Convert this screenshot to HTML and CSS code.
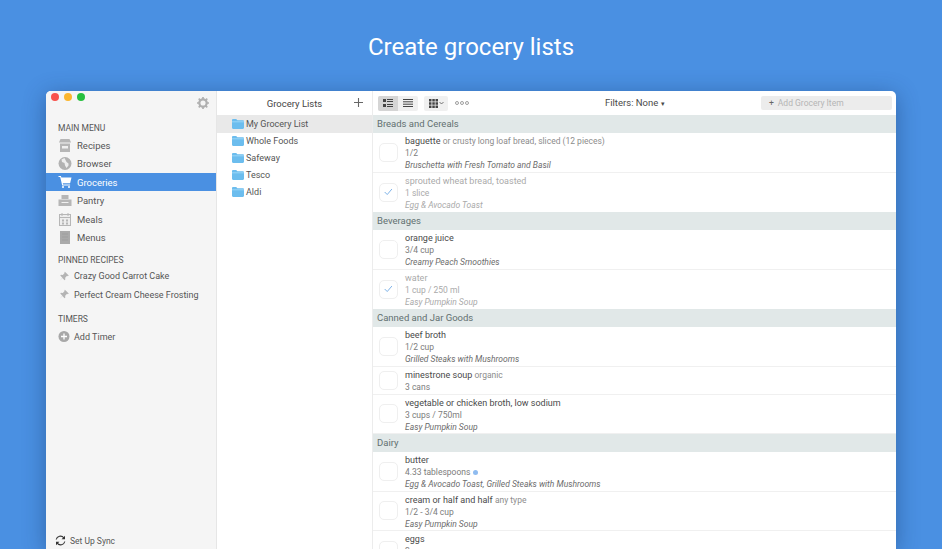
FILE: index.html
```html
<!DOCTYPE html>
<html>
<head>
	<meta charset="UTF-8">
	<title>Create grocery lists</title>
	<link rel="stylesheet" href="styles.css">
</head>
<body>
	<svg class="defs" width="0" height="0">
		<symbol id="folder" viewBox="0 0 12 10">
			<path d="M0 1.2C0 .5.5 0 1.2 0h3l1.2 1.3h5.400c.7 0 1.200.5 1.200 1.200v6.300c0 .7-.5 1.200-1.200 1.200H1.200C.5 10 0 9.500 0 8.800z" fill="#6cbdee"/>
			<rect x="0" y="2.300" width="12" height="1" fill="#9ad6f7"/>
		</symbol>
		<symbol id="pin" viewBox="0 0 12 12">
			<path d="M7 .8l4.200 4.200-1 .6-.9-.3-2 2 .1 2-.8.8-2.300-2.400L1 11l3.200-3.600L1.900 5l.8-.8 2 .1 2-2-.3-.9z" fill="#b4b4b4"/>
		</symbol>
		<symbol id="check" viewBox="0 0 20 20">
			<path d="M5.500 10l3 3 5.500-6.500" fill="none" stroke="#76aee6" stroke-width="1.100"/>
		</symbol>
	</svg>

	<h1 class="headline">Create grocery lists</h1>

	<div class="window">
		<aside class="sidebar">
			<div class="side_top">
				<div class="lights">
					<span class="light red"></span>
					<span class="light yellow"></span>
					<span class="light green"></span>
				</div>
				<svg class="gear" width="12" height="12" viewBox="0 0 14 14">
					<circle cx="7" cy="7" r="4.300" fill="none" stroke="#b0b0b0" stroke-width="2.600"/>
					<path d="M7 0v3M7 11v3M0 7h3M11 7h3M2 2l2.100 2.100M9.900 9.900L12 12M12 2L9.900 4.100M4.100 9.900L2 12" stroke="#b0b0b0" stroke-width="2"/>
				</svg>
			</div>

			<p class="side_title first">MAIN MENU</p>
			<a class="side_item">
				<svg width="12" height="13" viewBox="0 0 12 13"><path d="M1.500 0h9L12 3.500H0z" fill="#b6b6b6"/><path d="M1 4.500h10V13H1z" fill="#b6b6b6"/><path d="M3 7h6v2.500H3z" fill="#f0f0f0"/></svg>
				Recipes
			</a>
			<a class="side_item">
				<svg width="13" height="13" viewBox="0 0 13 13"><circle cx="6.500" cy="6.500" r="6.500" fill="#b2b2b2"/><path d="M6 1L3 2.500 3.500 5 6 6l.5 2.500L8 11l2-2.500V6.500L8 5 7 3z" fill="#eeeeee"/></svg>
				Browser
			</a>
			<a class="side_item active">
				<svg width="13" height="12" viewBox="0 0 13 12"><path d="M0 0h2.400l.5 1.500H13l-1.400 5.700H4.300l.3 1.200h7v1H3.700L1.700 1H0z" fill="#fff"/><circle cx="4.500" cy="11" r="1" fill="#fff"/><circle cx="10.500" cy="11" r="1" fill="#fff"/></svg>
				Groceries
			</a>
			<a class="side_item">
				<svg width="13" height="11" viewBox="0 0 13 11"><path d="M3 0h7v4H3z" fill="#b6b6b6"/><path d="M0 4.500h13V11H0z" fill="#b6b6b6"/><path d="M3 7h7v1H3z" fill="#f0f0f0"/></svg>
				Pantry
			</a>
			<a class="side_item">
				<svg width="12" height="13" viewBox="0 0 12 13"><rect x=".5" y="1.500" width="11" height="11" fill="#ededed" stroke="#b6b6b6"/><path d="M3 0v3M9 0v3M1 4.500h10" stroke="#b6b6b6"/><path d="M3 6.500h2v2H3zM7 6.500h2v2H7zM3 9.500h2v2H3zM7 9.500h2v2H7z" fill="#b6b6b6"/></svg>
				Meals
			</a>
			<a class="side_item">
				<svg width="10" height="13" viewBox="0 0 10 13"><path d="M0 0h10v13H0z" fill="#aaaaaa"/><path d="M2 3h6M2 6h6M2 9h6" stroke="#9c9c9c" stroke-width=".8"/></svg>
				Menus
			</a>

			<p class="side_title">PINNED RECIPES</p>
			<a class="side_item small"><svg width="11" height="11"><use href="#pin"/></svg>Crazy Good Carrot Cake</a>
			<a class="side_item small"><svg width="11" height="11"><use href="#pin"/></svg>Perfect Cream Cheese Frosting</a>

			<p class="side_title timers">TIMERS</p>
			<a class="side_item timer">
				<svg width="11" height="11" viewBox="0 0 11 11"><circle cx="5.500" cy="5.500" r="5.500" fill="#a8a8a8"/><path d="M5.500 2.500v6M2.500 5.500h6" stroke="#fff" stroke-width="1.300"/></svg>
				Add Timer
			</a>

			<div class="sync">
				<svg width="11" height="11" viewBox="0 0 11 11"><path d="M1.200 4.500A4.300 4.300 0 0 1 8.800 2.800M9.800 6.500A4.300 4.300 0 0 1 2.200 8.200" fill="none" stroke="#333" stroke-width="1.100"/><path d="M10 .8v3.400H6.600zM1 10.200V6.800h3.400z" fill="#333"/></svg>
				Set Up Sync
			</div>
		</aside>

		<section class="lists">
			<div class="lists_head">
				<span class="lists_title">Grocery Lists</span>
				<svg class="lists_add" width="9" height="9" viewBox="0 0 9 9"><path d="M4.500 0v9M0 4.500h9" stroke="#666" stroke-width="1.100"/></svg>
			</div>
			<a class="list_row selected"><svg width="12" height="10"><use href="#folder"/></svg>My Grocery List</a>
			<a class="list_row"><svg width="12" height="10"><use href="#folder"/></svg>Whole Foods</a>
			<a class="list_row"><svg width="12" height="10"><use href="#folder"/></svg>Safeway</a>
			<a class="list_row"><svg width="12" height="10"><use href="#folder"/></svg>Tesco</a>
			<a class="list_row"><svg width="12" height="10"><use href="#folder"/></svg>Aldi</a>
		</section>

		<main class="main">
			<div class="toolbar">
				<div class="view_btns">
					<span class="view_btn on">
						<svg width="10" height="8" viewBox="0 0 10 8"><path d="M0 0h3v3H0zM0 5h3v3H0z" fill="#444"/><path d="M4 .5h6M4 2.500h6M4 5.500h6M4 7.500h6" stroke="#444"/></svg>
					</span>
					<span class="view_btn">
						<svg width="10" height="8" viewBox="0 0 10 8"><path d="M0 .5h10M0 2.800h10M0 5.200h10M0 7.500h10" stroke="#444"/></svg>
					</span>
				</div>
				<span class="grid_btn">
					<svg width="9" height="9" viewBox="0 0 9 9"><path d="M0 0h2.500v2.500H0zM3.300 0h2.500v2.500H3.300zM6.500 0H9v2.500H6.500zM0 3.300h2.500v2.500H0zM3.300 3.300h2.500v2.500H3.300zM6.500 3.300H9v2.500H6.500zM0 6.500h2.500V9H0zM3.300 6.500h2.500V9H3.300zM6.500 6.500H9V9H6.500z" fill="#444"/></svg>
					<svg width="5" height="4" viewBox="0 0 5 4"><path d="M.5 1l2 2 2-2" fill="none" stroke="#555" stroke-width=".8"/></svg>
				</span>
				<svg class="dots" width="14" height="4" viewBox="0 0 14 4"><circle cx="2" cy="2" r="1.500" fill="none" stroke="#777" stroke-width=".7"/><circle cx="7" cy="2" r="1.500" fill="none" stroke="#777" stroke-width=".7"/><circle cx="12" cy="2" r="1.500" fill="none" stroke="#777" stroke-width=".7"/></svg>
				<span class="filters">Filters: None <small>▾</small></span>
				<span class="add_item"><b>+</b>Add Grocery Item</span>
			</div>

			<div class="group">Breads and Cereals</div>
			<div class="item">
				<span class="box"></span>
				<div class="info">
					<p class="name">baguette <span>or crusty long loaf bread, sliced (12 pieces)</span></p>
					<p class="qty">1/2</p>
					<p class="recipe">Bruschetta with Fresh Tomato and Basil</p>
				</div>
			</div>
			<div class="item done">
				<span class="box"><svg width="20" height="20"><use href="#check"/></svg></span>
				<div class="info">
					<p class="name">sprouted wheat bread, toasted</p>
					<p class="qty">1 slice</p>
					<p class="recipe">Egg &amp; Avocado Toast</p>
				</div>
			</div>

			<div class="group">Beverages</div>
			<div class="item">
				<span class="box"></span>
				<div class="info">
					<p class="name">orange juice</p>
					<p class="qty">3/4 cup</p>
					<p class="recipe">Creamy Peach Smoothies</p>
				</div>
			</div>
			<div class="item done">
				<span class="box"><svg width="20" height="20"><use href="#check"/></svg></span>
				<div class="info">
					<p class="name">water</p>
					<p class="qty">1 cup / 250 ml</p>
					<p class="recipe">Easy Pumpkin Soup</p>
				</div>
			</div>

			<div class="group">Canned and Jar Goods</div>
			<div class="item">
				<span class="box"></span>
				<div class="info">
					<p class="name">beef broth</p>
					<p class="qty">1/2 cup</p>
					<p class="recipe">Grilled Steaks with Mushrooms</p>
				</div>
			</div>
			<div class="item short">
				<span class="box"></span>
				<div class="info">
					<p class="name">minestrone soup <span>organic</span></p>
					<p class="qty">3 cans</p>
				</div>
			</div>
			<div class="item">
				<span class="box"></span>
				<div class="info">
					<p class="name">vegetable or chicken broth, low sodium</p>
					<p class="qty">3 cups / 750ml</p>
					<p class="recipe">Easy Pumpkin Soup</p>
				</div>
			</div>

			<div class="group">Dairy</div>
			<div class="item">
				<span class="box"></span>
				<div class="info">
					<p class="name">butter</p>
					<p class="qty">4.33 tablespoons <i class="note"></i></p>
					<p class="recipe">Egg &amp; Avocado Toast, Grilled Steaks with Mushrooms</p>
				</div>
			</div>
			<div class="item">
				<span class="box"></span>
				<div class="info">
					<p class="name">cream or half and half <span>any type</span></p>
					<p class="qty">1/2 - 3/4 cup</p>
					<p class="recipe">Easy Pumpkin Soup</p>
				</div>
			</div>
			<div class="item">
				<span class="box"></span>
				<div class="info">
					<p class="name">eggs</p>
					<p class="qty">2</p>
					<p class="recipe">&nbsp;</p>
				</div>
			</div>
		</main>
	</div>
</body>
</html>
```

FILE: styles.css
```css
html, body {
	height: 100%;
}

body {
	margin: 0;
	overflow: hidden;
	background-color: #4a90e2;
	font-family: "Roboto", "Liberation Sans", sans-serif;
	color: #555;
	display: flex;
	flex-direction: column;
}

.defs {
	display: none;
}

p {
	margin: 0;
}

.headline {
	margin: 0;
	flex: none;
	height: 91px;
	padding-top: 33px;
	box-sizing: border-box;
	font-size: 24px;
	line-height: 28px;
	font-weight: 400;
	color: #fff;
	text-align: center;
}

.window {
	flex: 1;
	min-height: 0;
	margin: 0 46px;
	display: flex;
	background-color: #fff;
	border-radius: 5px 5px 0 0;
	box-shadow: 0 4px 22px rgba(20, 50, 100, 0.45);
	overflow: hidden;
}

/* left menu */
.sidebar {
	width: 170px;
	flex: none;
	background-color: #f5f5f5;
	border-right: 1px solid #e6e6e6;
	display: flex;
	flex-direction: column;
	position: relative;
}

.side_top {
	height: 24px;
	display: flex;
	justify-content: space-between;
	padding: 0 7px 0 5px;
}

.lights {
	display: flex;
	gap: 5px;
	padding-top: 2px;
}

.light {
	width: 8px;
	height: 8px;
	border-radius: 50%;
}

.red { background-color: #f8524c; }
.yellow { background-color: #fbb62e; }
.green { background-color: #27c03f; }

.gear {
	margin-top: 6px;
}

.side_title {
	font-size: 8.500px;
	line-height: 12px;
	color: #555;
	padding-left: 12px;
	margin-top: 7px;
	margin-bottom: 1px;
}

.side_title.first {
	margin-bottom: 1.500px;
}

.side_title.timers {
	margin-top: 9px;
	margin-bottom: 3px;
}

.side_item {
	height: 18.500px;
	display: flex;
	align-items: center;
	font-size: 9.500px;
	color: #555;
	padding-left: 12px;
	gap: 5px;
	padding-top: 1px;
	box-sizing: border-box;
}

.side_item svg {
	width: 14px;
	flex: none;
}

.side_item.active {
	background-color: #4a90e2;
	color: #fff;
}

.side_item.small {
	font-size: 9px;
	gap: 3px;
	padding-left: 11px;
}

.side_item.timer {
	font-size: 9px;
	gap: 3px;
	padding-left: 11px;
	height: 17px;
}

.sync {
	position: absolute;
	left: 9px;
	bottom: 3px;
	display: flex;
	align-items: center;
	gap: 4px;
	font-size: 8.500px;
	color: #555;
}

/* grocery lists column */
.lists {
	width: 155px;
	flex: none;
	border-right: 1px solid #ececec;
}

.lists_head {
	height: 24px;
	display: flex;
	align-items: center;
	justify-content: center;
	position: relative;
	font-size: 9.500px;
	color: #444;
}

.lists_add {
	position: absolute;
	right: 9px;
	top: 7px;
}

.list_row {
	height: 17px;
	display: flex;
	align-items: center;
	gap: 2px;
	padding-left: 15px;
	font-size: 9px;
	color: #555;
}

.list_row.selected {
	background-color: #e9e9e9;
	height: 17.500px;
}

/* main list */
.main {
	flex: 1;
	min-width: 0;
	overflow: hidden;
}

.toolbar {
	height: 24px;
	display: flex;
	align-items: center;
	padding-left: 5px;
	position: relative;
}

.view_btns {
	display: flex;
	background-color: #f0f0f0;
	border-radius: 2px;
}

.view_btn {
	width: 20px;
	height: 15px;
	display: flex;
	align-items: center;
	justify-content: center;
}

.view_btn.on {
	background-color: #d5d5d5;
	border-radius: 2px 0 0 2px;
}

.grid_btn {
	margin-left: 6px;
	width: 24px;
	height: 15px;
	background-color: #f0f0f0;
	border-radius: 2px;
	display: flex;
	align-items: center;
	justify-content: center;
	gap: 1px;
}

.dots {
	margin-left: 7px;
}

.filters {
	position: absolute;
	left: 232px;
	top: 6px;
	font-size: 9.500px;
	line-height: 12px;
	color: #4a4a4a;
}

.filters small {
	font-size: 7px;
}

.add_item {
	position: absolute;
	right: 4px;
	top: 5px;
	width: 131px;
	height: 14px;
	padding-left: 8px;
	box-sizing: border-box;
	background-color: #ececec;
	border-radius: 2px;
	font-size: 8.500px;
	line-height: 14px;
	color: #b5b5b5;
}

.add_item b {
	color: #666;
	font-weight: 400;
	margin-right: 4px;
}

.group {
	height: 18px;
	line-height: 18px;
	padding-left: 4px;
	background-color: #e1e8e8;
	font-size: 9.500px;
	color: #617070;
}

.item {
	height: 39.500px;
	box-sizing: border-box;
	display: flex;
	align-items: center;
	border-bottom: 1px solid #f0f0f0;
}

.item.done {
	border-bottom: none;
}

.item.short {
	height: 28px;
}

.box {
	width: 19px;
	height: 19px;
	box-sizing: border-box;
	margin: 0 7px 0 6px;
	flex: none;
	border: 1px solid #efefef;
	border-radius: 5px;
	display: flex;
	align-items: center;
	justify-content: center;
}

.info {
	padding-top: 2px;
}

.name {
	font-size: 9px;
	line-height: 12px;
	color: #4a4a4a;
}

.name span {
	font-size: 8.500px;
	color: #8c8c8c;
}

.qty {
	font-size: 8.500px;
	line-height: 12px;
	color: #7c7c7c;
}

.recipe {
	font-size: 8.500px;
	line-height: 12px;
	color: #6c6c6c;
	font-style: italic;
}

.done .name,
.done .qty,
.done .recipe {
	color: #aaa;
}

.note {
	display: inline-block;
	width: 5px;
	height: 5px;
	border-radius: 50%;
	background-color: #8fbcf0;
	margin-left: 1px;
}
```
